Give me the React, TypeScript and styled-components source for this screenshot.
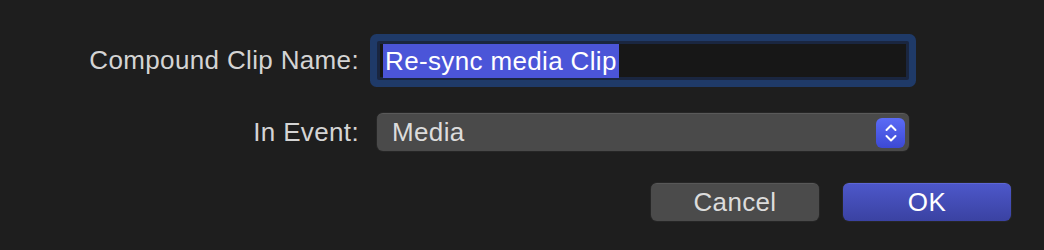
import React from 'react'
import styled, { createGlobalStyle } from 'styled-components'

const GlobalStyle = createGlobalStyle`
  html, body {
    margin: 0;
    padding: 0;
    background-color: #1e1e1e;
  }
  body {
    font-family: 'Liberation Sans', Arial, sans-serif;
    -webkit-font-smoothing: antialiased;
  }
`

const Dialog = styled.div`
  width: 1044px;
  height: 250px;
  box-sizing: border-box;
  padding-top: 41px;
  background-color: #1e1e1e;
`

const Form = styled.div`
  display: grid;
  grid-template-columns: 359px 532px;
  grid-template-rows: 39px 38px;
  column-gap: 18px;
  row-gap: 33px;
  align-items: center;
`

const Label = styled.label`
  text-align: right;
  font-size: 26px;
  letter-spacing: 0.35px;
  color: #d4d4d4;
  white-space: nowrap;
`

const NameField = styled.div`
  height: 39px;
  box-sizing: border-box;
  border: 3px solid #1a2640;
  border-radius: 2px;
  background-color: #171717;
  box-shadow: 0 0 0 7px #1f3a68;
  display: flex;
  align-items: center;
  padding-left: 3px;
`

const Selection = styled.span`
  background-color: #4b55d8;
  color: #ffffff;
  font-size: 26px;
  letter-spacing: 0.35px;
  line-height: 34px;
  padding: 0 2px;
  white-space: nowrap;
`

const Popup = styled.div`
  height: 38px;
  box-sizing: border-box;
  border-radius: 6px;
  background-color: #4a4a4a;
  border-top: 1px solid #5a5a5a;
  box-shadow: 0 0 0 1px #262626;
  display: flex;
  align-items: center;
  justify-content: space-between;
  padding: 0 4px 0 15px;
`

const PopupValue = styled.span`
  font-size: 26px;
  letter-spacing: 0.35px;
  color: #dcdcdc;
`

const Stepper = styled.div`
  width: 29px;
  height: 30px;
  border-radius: 6px;
  background: linear-gradient(#5b6bf6, #3c49d4);
  display: flex;
  align-items: center;
  justify-content: center;
`

const Buttons = styled.div`
  display: flex;
  justify-content: flex-end;
  gap: 24px;
  padding-right: 33px;
  margin-top: 32px;
`

const Button = styled.button<{ $primary?: boolean }>`
  width: 168px;
  height: 38px;
  border: none;
  border-radius: 6px;
  font-family: 'Liberation Sans', Arial, sans-serif;
  font-size: 26px;
  letter-spacing: 0.35px;
  color: ${p => (p.$primary ? '#ffffff' : '#dcdcdc')};
  background: ${p => (p.$primary ? 'linear-gradient(#4d57c9, #3a42a2)' : '#4b4b4b')};
  border-top: 1px solid ${p => (p.$primary ? '#5d67d6' : '#585858')};
  box-shadow: 0 0 0 1px #262626;
  padding: 0;
`

const Chevrons = () => (
  <svg width="16" height="22" viewBox="0 0 16 22" fill="none" stroke="#ffffff" strokeWidth="2" strokeLinecap="round" strokeLinejoin="round">
    <path d="M3.5 8 L8 3.5 L12.5 8" />
    <path d="M3.5 14 L8 18.5 L12.5 14" />
  </svg>
)

export default function App() {
  return (
    <>
      <GlobalStyle />
      <Dialog>
        <Form>
          <Label>Compound Clip Name:</Label>
          <NameField>
            <Selection>Re-sync media Clip</Selection>
          </NameField>
          <Label>In Event:</Label>
          <Popup>
            <PopupValue>Media</PopupValue>
            <Stepper>
              <Chevrons />
            </Stepper>
          </Popup>
        </Form>
        <Buttons>
          <Button>Cancel</Button>
          <Button $primary>OK</Button>
        </Buttons>
      </Dialog>
    </>
  )
}
